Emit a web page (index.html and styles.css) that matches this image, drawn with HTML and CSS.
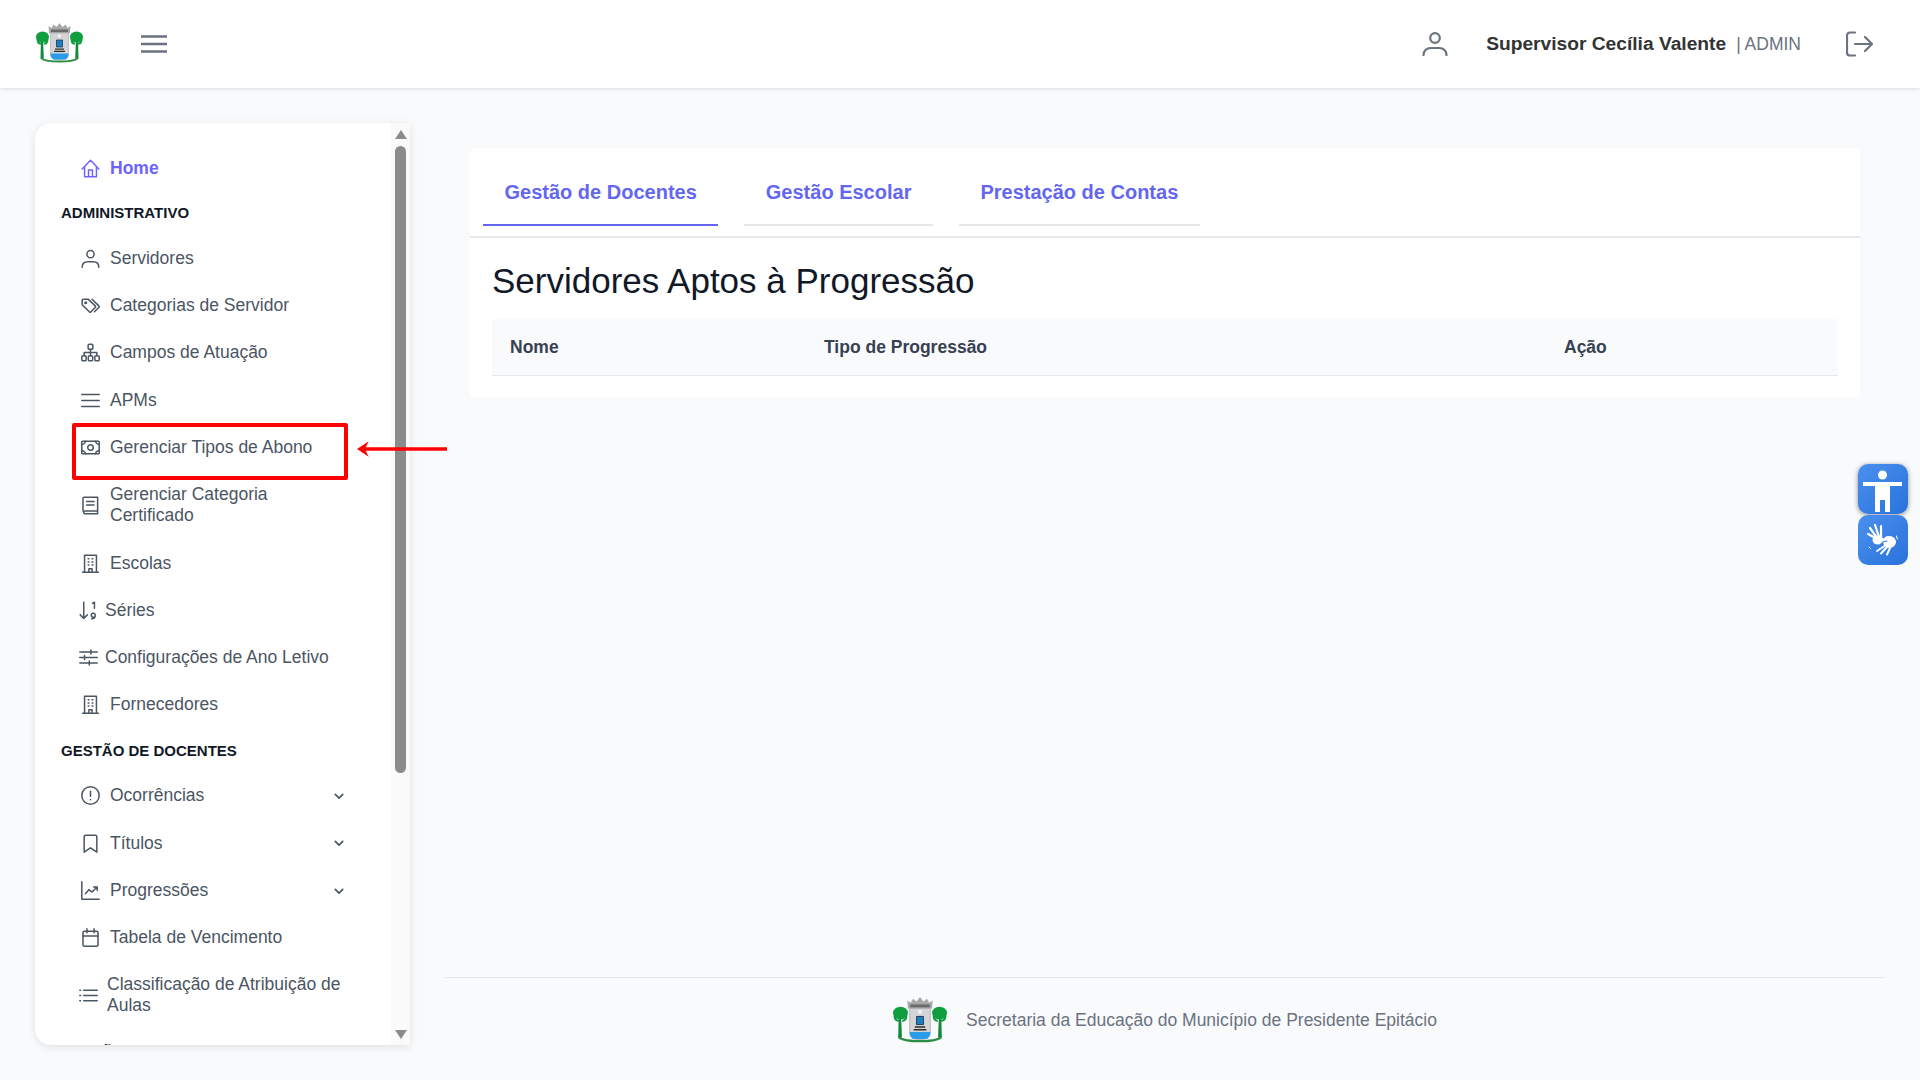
FILE: index.html
```html
<!DOCTYPE html>
<html lang="pt-BR">
<head>
  <meta charset="UTF-8">
  <meta name="viewport" content="width=device-width, initial-scale=1.0">
  <title>Servidores Aptos à Progressão</title>
  <link rel="stylesheet" href="styles.css">
</head>
<body>
  <svg class="defs" width="0" height="0">
    <symbol id="crest" viewBox="0 0 47 41">
      <path d="M5 16h2l.8 19H4.500zM40 16h2l.5 19h-3.300z" fill="#128a3a"/>
      <ellipse cx="6.500" cy="14" rx="6.500" ry="5.500" fill="#0f9d3f"/>
      <ellipse cx="40.500" cy="14" rx="6.500" ry="5.500" fill="#0f9d3f"/>
      <path d="M1.500 16c0 3.500 1.500 5 3.500 4.500M11.500 16c0 3.500-1.500 5-3.500 4.500M35.500 16c0 3.500 1.500 5 3.500 4.500M45.500 16c0 3.500-1.500 5-3.500 4.500" stroke="#0f9d3f" stroke-width="2" fill="none"/>
      <path d="M13 10 12.500 3l3 2 2-3.500 3 2.500L23.500 0l3 4 3-2.500 2 3.500 3-2-.5 7z" fill="#a8a8a8"/>
      <path d="M15 6.500h17V9H15z" fill="#6a6a6a"/>
      <path d="M14.500 10h18v21c0 4-3.500 6-9 6s-9-2-9-6z" fill="#d2d4d5" stroke="#9a9a9a" stroke-width=".5"/>
      <path d="M22 11.500h3v3h-3z" fill="#f2f2f2"/>
      <path d="M20.500 17h6v7h-6z" fill="#1c7fc4" stroke="#1b3a52" stroke-width=".8"/>
      <path d="M19 25.500h9v1.300h-9zM18 27.800h11v1.300H18z" fill="#2b2b2b"/>
      <path d="M14.500 30.500h18c0 3-1 5-3 6h-12c-2-1-3-3-3-6z" fill="#2a9be8"/>
      <path d="M5.500 35.500c6 4 30 4 36 0" stroke="#2c8d45" stroke-width="2" fill="none" stroke-linecap="round"/>
    </symbol>
  </svg>

  <header class="topbar">
    <div class="topbar-left">
      <svg class="logo"><use href="#crest"/></svg>
      <svg class="burger" viewBox="0 0 26 18" fill="none" stroke="#6b7280" stroke-width="2.400"><path d="M0 1.500h26M0 9h26M0 16.500h26"/></svg>
    </div>
    <div class="topbar-right">
      <svg class="user-icon" viewBox="0 0 26 24" fill="none" stroke="#6b7280" stroke-width="2.200" stroke-linecap="round"><circle cx="13" cy="6" r="4.800"/><path d="M1.500 23c0-4 3-7 7-7h9c4 0 7 3 7 7"/></svg>
      <span class="user-name">Supervisor Cecília Valente</span>
      <span class="user-role">| ADMIN</span>
      <svg class="logout-icon" viewBox="0 0 27 26" fill="none" stroke="#6b7280" stroke-width="2.200" stroke-linecap="round" stroke-linejoin="round"><path d="M9 1.500H4a3 3 0 0 0-3 3v17a3 3 0 0 0 3 3h5M9 13h17M19 6l7 7-7 7"/></svg>
    </div>
  </header>

  <div class="layout">
    <aside class="sidebar">
      <nav class="menu">
        <a class="item active">
          <svg class="ico" viewBox="0 0 24 24"><path d="M1.500 12.500 12 1.500l10.500 11M4.500 10v12.500h15V10M9.500 22.500V14h5v8.500"/></svg>
          <span>Home</span>
        </a>
        <h4 class="section">ADMINISTRATIVO</h4>
        <a class="item">
          <svg class="ico" viewBox="0 0 24 24"><circle cx="12" cy="6.500" r="4.500"/><path d="M1.500 23c0-4.500 3-7 7-7h7c4 0 7 2.500 7 7"/></svg>
          <span>Servidores</span>
        </a>
        <a class="item">
          <svg class="ico" viewBox="0 0 24 24"><path d="M1.500 5.500V11l9 9a1.500 1.500 0 0 0 2 0l5.500-5.500a1.500 1.500 0 0 0 0-2L9 4H3A1.500 1.500 0 0 0 1.500 5.500zM14 4l8.500 8.500a1.500 1.500 0 0 1 0 2L17 20"/><circle cx="6" cy="8.500" r="1"/></svg>
          <span>Categorias de Servidor</span>
        </a>
        <a class="item">
          <svg class="ico" viewBox="0 0 24 24"><rect x="9" y="1.500" width="6" height="6.500" rx="1.500"/><rect x="1" y="16" width="5.500" height="6.500" rx="1.500"/><rect x="9.250" y="16" width="5.500" height="6.500" rx="1.500"/><rect x="17.500" y="16" width="5.500" height="6.500" rx="1.500"/><path d="M12 8v8M4 16v-4h16v4"/></svg>
          <span>Campos de Atuação</span>
        </a>
        <a class="item">
          <svg class="ico" viewBox="0 0 24 24"><path d="M1 4.500h22M1 12h22M1 19.500h22"/></svg>
          <span>APMs</span>
        </a>
        <a class="item">
          <svg class="ico" viewBox="0 0 24 24"><rect x="1" y="4" width="22" height="16" rx="1"/><circle cx="12" cy="12" r="3.500"/><path d="M5.500 4c0 2.500-2 4-4.500 4M18.500 4c0 2.500 2 4 4.500 4M5.500 20c0-2.500-2-4-4.500-4M18.500 20c0-2.500 2-4 4.500-4"/></svg>
          <span>Gerenciar Tipos de Abono</span>
        </a>
        <a class="item">
          <svg class="ico" viewBox="0 0 24 24"><path d="M2.500 19V3a1.500 1.500 0 0 1 1.500-1.500h17V19H4.500a2 2 0 0 0 0 3.500H21V19M7 7h9.500M7 11.500h9.500"/></svg>
          <span>Gerenciar Categoria<br>Certificado</span>
        </a>
        <a class="item">
          <svg class="ico" viewBox="0 0 24 24"><path d="M4.500 23V1.500h15V23M2 23h20M9 6h1M14 6h1M9 10h1M14 10h1M9 14h1M14 14h1M10 23v-4.500h4V23"/></svg>
          <span>Escolas</span>
        </a>
        <a class="item tight">
          <svg class="ico" viewBox="0 0 24 24"><path d="M6 1.500V22M1.500 17.500 6 22l4.500-4.500M17 3 19.500 1.500V9M16 22.500c3 0 4.500-1.500 4.500-4.500a2.500 2.500 0 1 0-1 2"/></svg>
          <span>Séries</span>
        </a>
        <a class="item tight">
          <svg class="ico" viewBox="0 0 24 24"><path d="M1 5h22M1 12h22M1 19h22M15 2.500v5M7 9.500v5M13 16.500v5"/></svg>
          <span>Configurações de Ano Letivo</span>
        </a>
        <a class="item">
          <svg class="ico" viewBox="0 0 24 24"><path d="M4.500 23V1.500h15V23M2 23h20M9 6h1M14 6h1M9 10h1M14 10h1M9 14h1M14 14h1M10 23v-4.500h4V23"/></svg>
          <span>Fornecedores</span>
        </a>
        <h4 class="section">GESTÃO DE DOCENTES</h4>
        <a class="item">
          <svg class="ico" viewBox="0 0 24 24"><circle cx="12" cy="12" r="11"/><path d="M12 6.500v6.500M12 17v.5"/></svg>
          <span>Ocorrências</span>
          <svg class="chevron" viewBox="0 0 12 8"><path d="m1.500 1.500 4.500 4.500 4.500-4.500"/></svg>
        </a>
        <a class="item">
          <svg class="ico" viewBox="0 0 24 24"><path d="M4 23V3.500a2 2 0 0 1 2-2h12a2 2 0 0 1 2 2V23l-8-5.500z"/></svg>
          <span>Títulos</span>
          <svg class="chevron" viewBox="0 0 12 8"><path d="m1.500 1.500 4.500 4.500 4.500-4.500"/></svg>
        </a>
        <a class="item">
          <svg class="ico" viewBox="0 0 24 24"><path d="M1 1v22h22M5.500 16l4.500-5 4 3 6-6M16 7.500h4.500V12"/></svg>
          <span>Progressões</span>
          <svg class="chevron" viewBox="0 0 12 8"><path d="m1.500 1.500 4.500 4.500 4.500-4.500"/></svg>
        </a>
        <a class="item">
          <svg class="ico" viewBox="0 0 24 24"><rect x="2.500" y="4" width="19" height="19" rx="2"/><path d="M2.500 10h19M7.500 1v5M16.500 1v5"/></svg>
          <span>Tabela de Vencimento</span>
        </a>
        <a class="item list">
          <svg class="ico" viewBox="0 0 24 24"><path d="M6 5.500h17M6 12h17M6 18.500h17M1 5.500h1M1 12h1M1 18.500h1"/></svg>
          <span>Classificação de Atribuição de<br>Aulas</span>
        </a>
        <h4 class="section">GESTÃO ESCOLAR</h4>
      </nav>
      <div class="scrollbar">
        <span class="arrow-up"></span>
        <span class="thumb"></span>
        <span class="arrow-down"></span>
      </div>
      <div class="marker-box"></div>
      <svg class="marker-arrow" viewBox="0 0 92 16"><path d="M3 8h89" stroke="#ff0000" stroke-width="3.500"/><path d="M0 8 12 0 8 8l4 8z" fill="#ff0000"/></svg>
    </aside>

    <main class="content">
      <section class="card">
        <div class="tabs">
          <a class="tab on">Gestão de Docentes</a>
          <a class="tab">Gestão Escolar</a>
          <a class="tab">Prestação de Contas</a>
        </div>
        <div class="card-body">
          <h1>Servidores Aptos à Progressão</h1>
          <table>
            <thead>
              <tr>
                <th class="col-name">Nome</th>
                <th class="col-type">Tipo de Progressão</th>
                <th>Ação</th>
              </tr>
            </thead>
          </table>
        </div>
      </section>
      <footer class="foot">
        <svg class="foot-logo"><use href="#crest"/></svg>
        <span>Secretaria da Educação do Município de Presidente Epitácio</span>
      </footer>
    </main>
  </div>

  <div class="a11y">
    <div class="a11y-btn raised">
      <svg viewBox="0 0 50 50" fill="#fff"><circle cx="24.500" cy="11" r="4.500"/><path d="M5 18h39v4H32v26h-5V36h-5v12h-5V22H5z"/></svg>
    </div>
    <div class="a11y-btn">
      <svg viewBox="0 0 50 50" fill="none" stroke="#fff" stroke-linecap="round">
        <path d="M19 24 10 19M19 23 12 13M21 22 17 10M23 22 23 11" stroke-width="2.200"/>
        <ellipse cx="20" cy="25" rx="5.500" ry="4.500" fill="#fff" stroke="none"/>
        <path d="M28 30 19 36M29 32 23 38.500M32 33 29 39.500M26 26 20 27M24 26l5-4" stroke-width="2"/>
        <ellipse cx="31.500" cy="27" rx="6.500" ry="6" fill="#fff" stroke="none"/>
        <path d="M22 30c2-3 4-4 7-4" stroke="#2f7fe6" stroke-width="1.200"/>
        <path d="M38.500 21l.8 3M11 32l1.500 1.500" stroke-width="1"/>
      </svg>
    </div>
  </div>
</body>
</html>
```

FILE: styles.css
```css
* { box-sizing: border-box; }
html, body { height: 100%; }
body { margin: 0; background: #f9fafb; font-family: "Liberation Sans", Arial, sans-serif; color: #111827; overflow: hidden; }
.defs { position: absolute; }

.topbar { height: 88px; background: #fff; box-shadow: 0 1px 4px rgba(0, 0, 0, 0.12); display: flex; align-items: center; justify-content: space-between; padding: 0 47px 0 36px; position: relative; }
.topbar-left { display: flex; align-items: center; gap: 58px; }
.logo { width: 47px; height: 41px; margin-top: -2px; }
.burger { width: 26px; height: 18px; }
.topbar-right { display: flex; align-items: center; }
.user-icon { width: 26px; height: 24px; margin-right: 38px; }
.user-name { font-size: 19.200px; font-weight: 700; color: #333; margin-right: 10px; }
.user-role { font-size: 17.500px; color: #6b7280; margin-right: 45px; }
.logout-icon { width: 27px; height: 26px; }

.layout { display: flex; height: 992px; }
.sidebar { width: 375px; height: 922px; margin: 35px 0 0 35px; background: #fff; border-radius: 16px 0 0 16px; box-shadow: 0 2px 8px rgba(0, 0, 0, 0.1); display: flex; position: relative; flex-shrink: 0; }
.menu { flex: 1; padding: 22px 9px 0 26px; overflow: hidden; border-radius: 16px 0 0 16px; }
.section { margin: 0; height: 43.500px; line-height: 43.500px; font-size: 15px; font-weight: 700; color: #111827; }
.section:nth-of-type(1) { margin-top: -1px; }
.item { display: flex; align-items: center; padding: 13.150px 0 13.150px 20px; font-size: 17.500px; line-height: 21px; color: #4b5563; position: relative; }
.item.active { color: #6c63ff; font-weight: 700; }
.item.tight { padding-left: 18px; }
.item.tight .ico { margin-right: 7px; }
.item.list { padding-left: 18px; }
.item.list .ico { margin-right: 9px; }
.ico { width: 19px; height: 19px; margin-right: 10px; flex-shrink: 0; fill: none; stroke: currentColor; stroke-width: 1.900; stroke-linecap: round; stroke-linejoin: round; }
.chevron { width: 10px; height: 7px; position: absolute; right: 38px; top: 21px; fill: none; stroke: #4b5563; stroke-width: 2; stroke-linecap: round; stroke-linejoin: round; }

.scrollbar { width: 19px; background: #fafafa; display: flex; flex-direction: column; align-items: center; padding-top: 7px; position: relative; }
.arrow-up { width: 0; height: 0; border-left: 6.500px solid transparent; border-right: 6.500px solid transparent; border-bottom: 9px solid #8b8b8b; }
.thumb { width: 11px; height: 627px; margin-top: 7px; background: #8b8b8b; border-radius: 6px; }
.arrow-down { width: 0; height: 0; border-left: 6.500px solid transparent; border-right: 6.500px solid transparent; border-top: 9px solid #8b8b8b; position: absolute; bottom: 6px; }

.marker-box { position: absolute; left: 37px; top: 300px; width: 276px; height: 57px; border: 4px solid #ff0000; border-radius: 2px; }
.marker-arrow { position: absolute; left: 322px; top: 318px; width: 90px; height: 16px; }

.content { flex: 1; display: flex; flex-direction: column; min-width: 0; padding-top: 60px; }
.card { margin: 0 60px; height: 250px; background: #fff; border-radius: 6px; }
.tabs { display: flex; gap: 26px; height: 90px; padding: 14px 0 0 13px; border-bottom: 2px solid #e5e7eb; }
.tab { height: 64px; padding: 0 21.500px; line-height: 60px; font-size: 20px; font-weight: 700; color: #6366f1; border-bottom: 2px solid #e5e7eb; }
.tab.on { border-bottom-color: #6366f1; }
.card-body { padding: 0 22px; }
h1 { margin: 0; height: 81px; line-height: 86px; font-size: 35px; font-weight: 400; color: #111827; }
table { width: 100%; border-collapse: collapse; background: #f9fafb; border-bottom: 1px solid #e5e7eb; }
th { height: 56px; padding: 1px 0 0 18px; text-align: left; font-size: 17.500px; font-weight: 700; color: #374151; }
.col-name { width: 314px; }
.col-type { width: 740px; }

.foot { margin: auto 35px 17px; height: 86px; border-top: 1px solid #e5e7eb; display: flex; align-items: center; justify-content: center; gap: 19px; font-size: 17.500px; color: #6b7280; }
.foot-logo { width: 54px; height: 49px; }

.a11y { position: absolute; left: 1858px; top: 464px; display: flex; flex-direction: column; gap: 1px; }
.a11y-btn { width: 50px; height: 50px; border-radius: 10px; background: linear-gradient(135deg, #4a90ee, #2a72dc); }
.a11y-btn.raised { box-shadow: 0 1px 5px rgba(0, 0, 0, 0.45); }
.a11y-btn svg { display: block; width: 50px; height: 50px; }
```
